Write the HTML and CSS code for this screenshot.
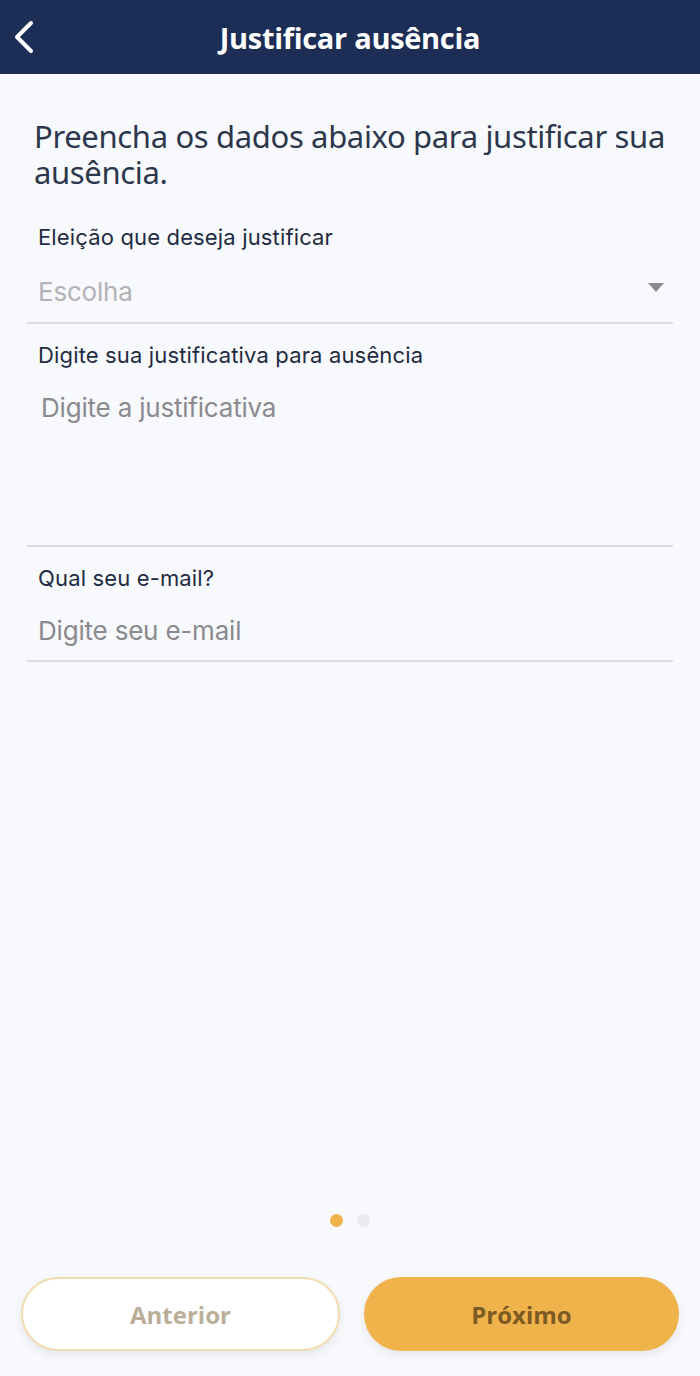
FILE: index.html
```html
<!DOCTYPE html>
<html lang="pt-BR">
<head>
    <meta charset="UTF-8">
    <meta name="viewport" content="width=device-width, initial-scale=1.0">
    <title>Justificar ausência</title>
    <link rel="stylesheet" href="styles.css">
</head>
<body>
    <header class="topbar">
        <button class="back-button" aria-label="Voltar">
            <svg width="24" height="34" viewBox="0 0 24 34">
                <path d="M19 3 L5 17 L19 31" fill="none" stroke="#ffffff" stroke-width="4" stroke-linecap="round" stroke-linejoin="round"/>
            </svg>
        </button>
        <h1>Justificar ausência</h1>
    </header>

    <main class="content">
        <p class="intro">Preencha os dados abaixo para justificar sua ausência.</p>

        <div class="field">
            <label class="field-label">Eleição que deseja justificar</label>
            <div class="select-row">
                <span class="placeholder light">Escolha</span>
                <span class="arrow"></span>
            </div>
        </div>

        <div class="field">
            <label class="field-label">Digite sua justificativa para ausência</label>
            <div class="textarea-box">
                <span class="placeholder">Digite a justificativa</span>
            </div>
        </div>

        <div class="field">
            <label class="field-label">Qual seu e-mail?</label>
            <div class="input-row">
                <span class="placeholder">Digite seu e-mail</span>
            </div>
        </div>
    </main>

    <div class="pager">
        <span class="dot active"></span>
        <span class="dot"></span>
    </div>

    <div class="actions">
        <button class="btn btn-outline">Anterior</button>
        <button class="btn btn-primary">Próximo</button>
    </div>
</body>
</html>
```

FILE: styles.css
```css
* {
    box-sizing: border-box;
}

html, body {
    height: 100%;
}

body {
    margin: 0;
    font-family: "Inter", "Noto Sans", sans-serif;
    background-color: #f7f9fc;
    display: flex;
    flex-direction: column;
    min-height: 1376px;
}

.topbar {
    background-color: #1c2e55;
    height: 74px;
    display: flex;
    align-items: center;
    justify-content: center;
    position: relative;
}

.topbar h1 {
    margin: 0;
    color: #ffffff;
    font-family: "Open Sans", sans-serif;
    font-weight: 700;
    font-size: 29px;
    letter-spacing: -0.3px;
}

.back-button {
    position: absolute;
    left: 12px;
    top: 20px;
    background: none;
    border: none;
    padding: 0;
}

.content {
    padding: 0 27px;
    flex: 1;
}

.intro {
    margin: 44px -22px 0 7px;
    font-family: "Noto Sans", sans-serif;
    font-size: 31px;
    line-height: 36px;
    color: #2c374c;
    letter-spacing: -0.35px;
}

.field {
    border-bottom: 2px solid #dcdde0;
}

.field-label {
    display: block;
    padding-left: 11px;
    font-size: 22px;
    line-height: 26px;
    color: #1f2b42;
    letter-spacing: 0.15px;
}

.field:first-of-type .field-label {
    margin-top: 34px;
}

.field + .field .field-label {
    margin-top: 18px;
}

.placeholder {
    font-size: 26px;
    line-height: 30px;
    color: #8a8a8e;
    letter-spacing: -0.2px;
}

.placeholder.light {
    color: #b3b3b6;
}

.select-row {
    display: flex;
    justify-content: space-between;
    align-items: center;
    padding: 27px 9px 15px 11px;
}

.arrow {
    width: 0;
    height: 0;
    border-left: 8px solid transparent;
    border-right: 8px solid transparent;
    border-top: 9px solid #8c8c90;
    margin-bottom: 10px;
}

.textarea-box {
    height: 177px;
    padding: 25px 14px;
}

.input-row {
    padding: 25px 11px 14px 11px;
}

.pager {
    display: flex;
    justify-content: center;
    gap: 14px;
    margin-bottom: 50px;
}

.dot {
    width: 13px;
    height: 13px;
    border-radius: 50%;
    background-color: #e9ebef;
}

.dot.active {
    background-color: #f0b24b;
}

.actions {
    display: flex;
    gap: 24px;
    padding: 0 21px 25px 21px;
}

.btn {
    flex: 1;
    height: 74px;
    border-radius: 37px;
    font-family: "Open Sans", sans-serif;
    font-weight: 700;
    font-size: 24px;
    cursor: pointer;
    box-shadow: 0 4px 10px rgba(0, 0, 0, 0.08);
}

.btn-outline {
    background-color: #ffffff;
    border: 2px solid #f3dcaf;
    color: #b9af98;
}

.btn-primary {
    background-color: #f0b24b;
    border: none;
    color: #7b5a23;
}
```
